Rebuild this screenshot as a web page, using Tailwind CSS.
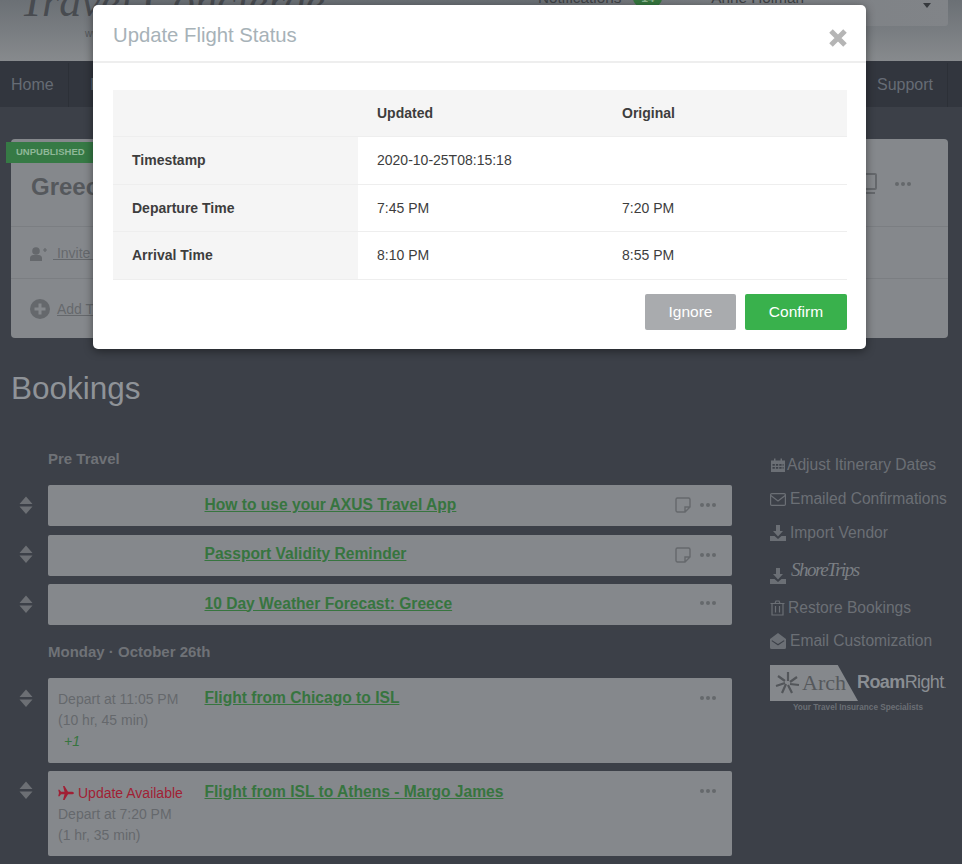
<!DOCTYPE html>
<html lang="en">
<head>
    <meta charset="UTF-8">
    <meta name="viewport" content="width=device-width, initial-scale=1.0">
    <title>Update Flight Status</title>
    <script src="https://cdn.jsdelivr.net/npm/@tailwindcss/browser@4"></script>
</head>
<body class="relative h-[864px] overflow-hidden bg-[#3c4048] text-[14px] [font-family:'Liberation_Sans',Arial,sans-serif]">

    <!-- Header, scrolled partly out of view -->
    <header class="flex h-[61px] justify-between overflow-hidden bg-gradient-to-b from-[#6b7075] to-[#878a8d] pr-[14px]">
        <div class="pl-[20px]">
            <div class="-mt-[20px] h-[44px] text-[44px] leading-[44px] italic text-[#484b50] [font-family:'Liberation_Serif',serif]">Travel Concierge</div>
            <div class="mt-[4px] pl-[65px] text-[10px] leading-[12px] text-[#55585c]">www.travelconcierge.com</div>
        </div>
        <div class="flex h-[26px] w-[410px] rounded-b-[3px] bg-gradient-to-r from-transparent via-[#7d8185] to-[#818488]">
            <div class="-mt-[11px] flex h-[18px] items-center text-[15.3px] text-[#3f4246]">
                <span>Notifications</span>
                <span class="ml-[12px] flex h-[18px] w-[29px] items-center justify-center rounded-[9px] bg-[#35773f] text-[12px] font-bold text-[#8bb590]">14</span>
                <span class="ml-[49px]">Anne Holman</span>
            </div>
            <svg class="ml-[119px] mt-[3px]" width="8" height="5" viewBox="0 0 8 5"><path d="M0 0h8L4 5z" fill="#36393d"/></svg>
        </div>
    </header>

    <!-- Main nav -->
    <nav class="flex h-[46px] items-center justify-between bg-[#32363e] pt-[2px] text-[16px] text-[#666c75]">
        <div class="flex h-full items-center">
            <a class="flex h-full w-[69px] items-center border-r border-[#2c3037] pl-[11px]">Home</a>
            <a class="pl-[21px]">Itineraries</a>
        </div>
        <div class="flex h-full items-center">
            <a class="flex h-full w-[85px] items-center border-r border-[#2c3037] pl-[14px] pr-[16px]">Support</a>
            <div class="w-[14px]"></div>
        </div>
    </nav>

    <main class="pl-[11px] pt-[32px]">
        <!-- Trip card -->
        <section class="relative h-[199px] w-[937px] rounded-[4px] bg-[#85888c]">
            <span class="absolute -left-[5px] top-[3px] flex h-[21px] w-[87px] items-center bg-[#367a45] pl-[10px] text-[9.5px] font-bold text-[#8fb798]">UNPUBLISHED</span>
            <div class="flex h-[88px] items-center justify-between border-b border-[#7b7e82] pl-[20px] pr-[37px] pt-[9px]">
                <h2 class="text-[24px] font-bold text-[#55585c]">Greece</h2>
                <div class="-mt-[6px] flex items-center gap-[18px]">
                    <svg width="16" height="22" viewBox="0 0 16 22" fill="none" stroke="#65686c" stroke-width="2"><rect x="1" y="1" width="14" height="15" rx="1"/><path d="M3 20h11"/></svg>
                    <svg width="16" height="4" viewBox="0 0 16 4" fill="#65686c"><circle cx="2" cy="2" r="2"/><circle cx="8" cy="2" r="2"/><circle cx="14" cy="2" r="2"/></svg>
                </div>
            </div>
            <div class="flex h-[52px] items-center border-b border-[#7b7e82] pl-[19px] pt-[2px] text-[#65686c]">
                <svg width="17" height="14" viewBox="0 0 17 14" fill="#65686c"><circle cx="6" cy="4" r="3.8"/><path d="M0 14v-3c0-2 2-3 3-3h6c1 0 3 1 3 3v3z"/><path d="M13 3h4M15 1v4" stroke="#65686c" stroke-width="1.2"/></svg>
                <a class="ml-[6px] underline">&nbsp;Invite Travelers</a>
            </div>
            <div class="flex h-[58px] items-center pl-[19px] pt-[2px] text-[#65686c]">
                <svg width="20" height="20" viewBox="0 0 20 20"><circle cx="10" cy="10" r="10" fill="#65686c"/><path d="M10 4.5v11M4.5 10h11" stroke="#85888c" stroke-width="3"/></svg>
                <a class="ml-[7px] underline">Add Travelers</a>
            </div>
        </section>

        <h1 class="mt-[33px] text-[31.5px] leading-[34px] text-[#8f9398]">Bookings</h1>

        <div class="mt-[44px] flex">
            <!-- Bookings list -->
            <div class="w-[721px]">
                <h3 class="ml-[37px] text-[15px] leading-[20px] font-bold text-[#6f7277]">Pre Travel</h3>

                <div class="mt-[16px] flex">
                    <svg class="ml-[8px] mt-[11px] shrink-0" width="14" height="18" viewBox="0 0 14 18" fill="#6c6f74"><path d="M7 0.5 13.5 8H0.5zM0.5 10.5h13L7 18z"/></svg>
                    <div class="ml-[15px] flex h-[41px] w-[684px] rounded-[2px] bg-[#85888c] pl-[156.5px] pr-[16px]">
                        <a class="mt-[10px] text-[15.6px] leading-[20px] font-bold text-[#37753f] underline">How to use your AXUS Travel App</a>
                        <div class="ml-auto mt-[12px] flex h-[16px] items-center gap-[9px]">
                            <svg width="16" height="16" viewBox="0 0 16 16" fill="none" stroke="#65686c" stroke-width="1.4"><path d="M2.5 1h11a1.5 1.5 0 0 1 1.5 1.5V10l-5 5H2.500A1.500 1.500 0 0 1 1 13.500v-11A1.500 1.500 0 0 1 2.500 1zM15 10h-5v5"/></svg>
                            <svg width="16" height="4" viewBox="0 0 16 4" fill="#65686c"><circle cx="2" cy="2" r="2"/><circle cx="8" cy="2" r="2"/><circle cx="14" cy="2" r="2"/></svg>
                        </div>
                    </div>
                </div>

                <div class="mt-[8.5px] flex">
                    <svg class="ml-[8px] mt-[10.5px] shrink-0" width="14" height="18" viewBox="0 0 14 18" fill="#6c6f74"><path d="M7 0.5 13.5 8H0.5zM0.5 10.5h13L7 18z"/></svg>
                    <div class="ml-[15px] flex h-[41px] w-[684px] rounded-[2px] bg-[#85888c] pl-[156.5px] pr-[16px]">
                        <a class="mt-[9.5px] text-[15.6px] leading-[20px] font-bold text-[#37753f] underline">Passport Validity Reminder</a>
                        <div class="ml-auto mt-[12px] flex h-[16px] items-center gap-[9px]">
                            <svg width="16" height="16" viewBox="0 0 16 16" fill="none" stroke="#65686c" stroke-width="1.4"><path d="M2.5 1h11a1.5 1.5 0 0 1 1.5 1.5V10l-5 5H2.500A1.500 1.500 0 0 1 1 13.500v-11A1.500 1.500 0 0 1 2.500 1zM15 10h-5v5"/></svg>
                            <svg width="16" height="4" viewBox="0 0 16 4" fill="#65686c"><circle cx="2" cy="2" r="2"/><circle cx="8" cy="2" r="2"/><circle cx="14" cy="2" r="2"/></svg>
                        </div>
                    </div>
                </div>

                <div class="mt-[8px] flex">
                    <svg class="ml-[8px] mt-[11px] shrink-0" width="14" height="18" viewBox="0 0 14 18" fill="#6c6f74"><path d="M7 0.5 13.5 8H0.5zM0.5 10.5h13L7 18z"/></svg>
                    <div class="ml-[15px] flex h-[41px] w-[684px] rounded-[2px] bg-[#85888c] pl-[156.5px] pr-[16px]">
                        <a class="mt-[10px] text-[15.6px] leading-[20px] font-bold text-[#37753f] underline">10 Day Weather Forecast: Greece</a>
                        <div class="ml-auto mt-[11px] flex h-[16px] items-center">
                            <svg width="16" height="4" viewBox="0 0 16 4" fill="#65686c"><circle cx="2" cy="2" r="2"/><circle cx="8" cy="2" r="2"/><circle cx="14" cy="2" r="2"/></svg>
                        </div>
                    </div>
                </div>

                <h3 class="ml-[37px] mt-[17px] text-[15px] leading-[20px] font-bold text-[#6f7277]">Monday · October 26th</h3>

                <div class="mt-[16px] flex">
                    <svg class="ml-[8px] mt-[11px] shrink-0" width="14" height="18" viewBox="0 0 14 18" fill="#6c6f74"><path d="M7 0.5 13.5 8H0.5zM0.5 10.5h13L7 18z"/></svg>
                    <div class="ml-[15px] flex h-[85px] w-[684px] rounded-[2px] bg-[#85888c] pl-[10px] pr-[16px]">
                        <div class="w-[146.5px] pt-[11px] leading-[21px] text-[#65686c]">
                            <div>Depart at 11:05 PM</div>
                            <div>(10 hr, 45 min)</div>
                            <div class="pl-[6px] italic text-[#37753f]">+1</div>
                        </div>
                        <a class="mt-[10px] self-start text-[15.6px] leading-[20px] font-bold text-[#37753f] underline">Flight from Chicago to ISL</a>
                        <div class="ml-auto mt-[12px] flex h-[16px] items-center">
                            <svg width="16" height="4" viewBox="0 0 16 4" fill="#65686c"><circle cx="2" cy="2" r="2"/><circle cx="8" cy="2" r="2"/><circle cx="14" cy="2" r="2"/></svg>
                        </div>
                    </div>
                </div>

                <div class="mt-[8px] flex">
                    <svg class="ml-[8px] mt-[10px] shrink-0" width="14" height="18" viewBox="0 0 14 18" fill="#6c6f74"><path d="M7 0.5 13.5 8H0.5zM0.5 10.5h13L7 18z"/></svg>
                    <div class="ml-[15px] flex h-[85px] w-[684px] rounded-[2px] bg-[#85888c] pl-[10px] pr-[16px]">
                        <div class="w-[146.5px] pt-[12px] leading-[21px] text-[#65686c]">
                            <div class="flex items-center text-[#a11f34]">
                                <svg class="mr-[4px]" width="16" height="14" viewBox="0 0 16 14" fill="#a11f34"><path d="M16 7c0-.7-1.200-1.300-2.500-1.300H10L6.500 0H5l1.500 5.700H3L1.500 3.800H0.200L1 7 .200 10.200H1.500L3 8.300h3.500L5 14h1.500L10 8.300h3.500C14.800 8.300 16 7.700 16 7z"/></svg>
                                Update Available
                            </div>
                            <div>Depart at 7:20 PM</div>
                            <div>(1 hr, 35 min)</div>
                        </div>
                        <a class="mt-[11px] self-start text-[15.6px] leading-[20px] font-bold text-[#37753f] underline">Flight from ISL to Athens - Margo James</a>
                        <div class="ml-auto mt-[12px] flex h-[16px] items-center">
                            <svg width="16" height="4" viewBox="0 0 16 4" fill="#65686c"><circle cx="2" cy="2" r="2"/><circle cx="8" cy="2" r="2"/><circle cx="14" cy="2" r="2"/></svg>
                        </div>
                    </div>
                </div>
            </div>

            <!-- Side links -->
            <aside class="ml-[38px] w-[192px] text-[15.6px] leading-[20px] text-[#6b6f75]">
                <a class="mt-[6px] flex items-center gap-[1px]">
                    <svg width="16" height="16" viewBox="0 0 16 16" fill="#6b6f75"><path d="M1 3.500h3V1.500h1.500v2h5v-2H12v2h3V15H1zM2.500 7v1.800h2.300V7zm3.400 0v1.800h2.300V7zm3.400 0v1.800h2.300V7zm3.300 0v1.800h1V7zM2.500 10v1.800h2.300V10zm3.400 0v1.800h2.300V10zm3.400 0v1.800h2.300V10zm3.300 0v1.800h1V10z" fill-rule="evenodd"/></svg>
                    Adjust Itinerary Dates
                </a>
                <a class="mt-[14px] flex items-center gap-[4px]">
                    <svg width="16" height="13" viewBox="0 0 16 13" fill="none" stroke="#6b6f75" stroke-width="1.200"><rect x=".6" y=".6" width="14.800" height="11.800" rx="1.200"/><path d="M.8 2.500 8 8l7.200-5.500"/></svg>
                    Emailed Confirmations
                </a>
                <a class="mt-[14px] flex items-center gap-[4px]">
                    <svg width="16" height="16" viewBox="0 0 16 16" fill="#6b6f75"><path d="M6 0h4v6h3L8 11.500 3 6h3zM0 11h4.500L8 14l3.500-3H16v5H0z"/></svg>
                    Import Vendor
                </a>
                <a class="mt-[15px] flex h-[27px] items-center">
                    <svg class="mt-[8px]" width="16" height="16" viewBox="0 0 16 16" fill="#6b6f75"><path d="M6 0h4v6h3L8 11.500 3 6h3zM0 11h4.500L8 14l3.500-3H16v5H0z"/></svg>
                    <span class="ml-[5px] -mt-[3px] text-[19px] italic tracking-[-1.5px] text-[#7a7e83] [font-family:'Liberation_Serif',serif]">ShoreTrips</span>
                </a>
                <a class="mt-[13px] flex items-center gap-[3px]">
                    <svg width="15" height="16" viewBox="0 0 15 16" fill="none" stroke="#6b6f75" stroke-width="1.200"><path d="M.5 3.500h14M2 3.500V15h11V3.500M5 3.500 6 1h3l1 2.500M5.500 6v6.500M9.500 6v6.500"/></svg>
                    Restore Bookings
                </a>
                <a class="mt-[13px] flex items-center gap-[4px]">
                    <svg width="16" height="16" viewBox="0 0 16 16" fill="#6b6f75"><path d="M8 0 16 6v8.500a1.500 1.500 0 0 1-1.500 1.500h-13A1.500 1.500 0 0 1 0 14.500V6zM1.500 8 8 12.500 14.500 8l-.6-.8L8 11 2.100 7.200z" fill-rule="evenodd"/></svg>
                    Email Customization
                </a>
                <div class="mt-[14px]">
                    <div class="flex items-center">
                        <div class="flex h-[36px] w-[88px] items-center pl-[5px] [clip-path:polygon(0_0,77%_0,100%_100%,0_100%)] bg-[#85888c]">
                            <svg width="26" height="26" viewBox="0 0 26 26" stroke="#53565a" stroke-width="2.200"><path d="M13 11V2M15 12l7-5M15 14l9 1M13 15l4 8M11 14l-4 9M10 13 1 16M10 11 3 6"/></svg>
                            <span class="ml-[1px] text-[22px] leading-[36px] text-[#55585c] [font-family:'Liberation_Serif',serif]">Arch</span>
                        </div>
                        <span class="-ml-[1px] mt-[1px] text-[18px] tracking-[-0.6px] text-[#8a8e93]"><b>Roam</b>Right<span class="text-[9px]">.</span></span>
                    </div>
                    <div class="ml-[23px] mt-[1px] text-[8.2px] leading-[12px] font-bold text-[#6b6f75]">Your Travel Insurance Specialists</div>
                </div>
            </aside>
        </div>
    </main>

    <!-- Modal -->
    <div class="absolute left-[93px] top-[5px] h-[344px] w-[773px] rounded-[5px] bg-white shadow-[0_2px_10px_rgba(0,0,0,0.45)]">
        <div class="flex h-[58px] items-center justify-between border-b-2 border-[#eeeeee] pl-[20px] pr-[19px]">
            <h2 class="pt-[4px] text-[20.3px] text-[#a7b2b8]">Update Flight Status</h2>
            <svg class="mt-[9px]" width="18" height="18" viewBox="0 0 18 18" stroke="#b5b5b5" stroke-width="5"><path d="M2 2l14 14M16 2 2 16"/></svg>
        </div>
        <div class="px-[20px] pt-[27px]">
            <table class="w-[734px] table-fixed border-collapse text-[#3d3d3d]">
                <thead>
                    <tr class="h-[46px] border-b border-[#eeeeee] bg-[#f5f5f5] font-bold">
                        <th class="w-[245px]"></th>
                        <th class="w-[245px] pl-[19px] pt-[1px] text-left font-bold">Updated</th>
                        <th class="pl-[19px] pt-[1px] text-left font-bold">Original</th>
                    </tr>
                </thead>
                <tbody>
                    <tr class="h-[48px] border-b border-[#eeeeee]">
                        <td class="bg-[#f5f5f5] pl-[19px] font-bold">Timestamp</td>
                        <td class="pl-[19px]">2020-10-25T08:15:18</td>
                        <td class="pl-[19px]"></td>
                    </tr>
                    <tr class="h-[47px] border-b border-[#eeeeee]">
                        <td class="bg-[#f5f5f5] pl-[19px] pt-[1px] font-bold">Departure Time</td>
                        <td class="pl-[19px] pt-[1px]">7:45 PM</td>
                        <td class="pl-[19px] pt-[1px]">7:20 PM</td>
                    </tr>
                    <tr class="h-[48px] border-b border-[#eeeeee]">
                        <td class="bg-[#f5f5f5] pl-[19px] font-bold">Arrival Time</td>
                        <td class="pl-[19px]">8:10 PM</td>
                        <td class="pl-[19px]">8:55 PM</td>
                    </tr>
                </tbody>
            </table>
            <div class="mt-[14px] flex w-[734px] justify-end gap-[9px] text-[15.5px]">
                <button class="h-[36px] w-[91px] rounded-[2px] bg-[#a9abae] text-white">Ignore</button>
                <button class="h-[36px] w-[102px] rounded-[2px] bg-[#39b14c] text-white">Confirm</button>
            </div>
        </div>
    </div>

</body>
</html>
